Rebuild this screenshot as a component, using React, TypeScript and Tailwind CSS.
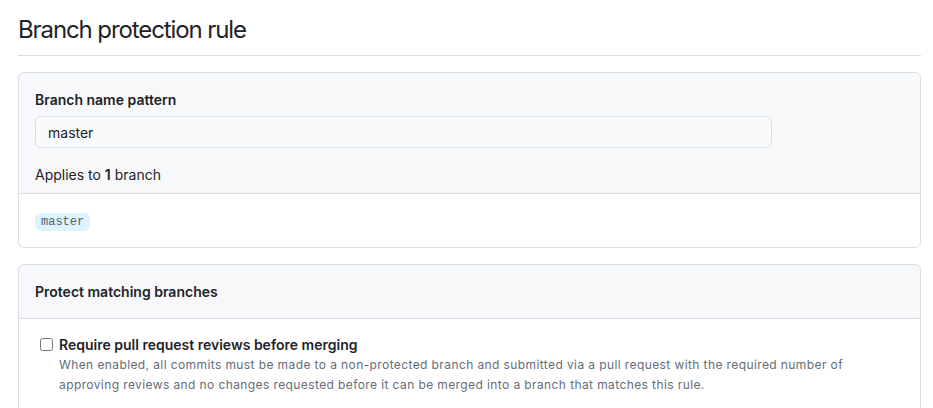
import type React from 'react';

const App: React.FC = () => {
	return (
		<div className="min-h-screen bg-white pl-[18px] pr-[12px] text-[#1f2328] font-['Inter','Liberation_Sans',sans-serif]">
			<div className="pt-[12px] pb-[7px] border-b border-[#d8dee4]">
				<h1 className="text-[24px] leading-[36px] font-normal tracking-[-1.1px]">Branch protection rule</h1>
			</div>

			<div className="mt-[16px] rounded-md border border-[#d8dee4] overflow-hidden">
				<div className="bg-[#f6f8fa] px-4 pt-4 pb-[8px] border-b border-[#d8dee4]">
					<label className="block text-[14px] leading-[21px] font-semibold">
						Branch name pattern
					</label>
					<input
						type="text"
						defaultValue="master"
						className="mt-[6px] block w-[737px] h-[32px] px-3 text-[14px] rounded-md border border-[#d8dee4] bg-[#f9fafb] text-[#1f2328] outline-none"
					/>
					<p className="mt-[16px] text-[14px] leading-[21px]">
						Applies to <strong className="font-semibold">1</strong> branch
					</p>
				</div>
				<div className="flex items-start px-4 pt-[19px] h-[53px]">
					<span className="block px-[6px] h-[18px] leading-[18px] rounded-md bg-[#ddf4ff] text-[#57606a] text-[12px] font-['Liberation_Mono','DejaVu_Sans_Mono',monospace]">
						master
					</span>
				</div>
			</div>

			<div className="mt-[16px] rounded-t-md border border-b-0 border-[#d8dee4] overflow-hidden">
				<div className="bg-[#f6f8fa] px-4 py-4 border-b border-[#d8dee4]">
					<h2 className="text-[14px] leading-[21px] font-semibold">Protect matching branches</h2>
				</div>
				<div className="pl-[21px] pr-4 pt-[15px] pb-6">
					<div className="flex items-start gap-[6px]">
						<input
							type="checkbox"
							className="mt-[4px] w-[13px] h-[13px] shrink-0"
						/>
						<div>
							<div className="text-[14px] leading-[21px] font-semibold">
								Require pull request reviews before merging
							</div>
							<p className="text-[12px] leading-[20px] text-[#656d76] tracking-[0.4px] max-w-[820px]">
								When enabled, all commits must be made to a non-protected branch and submitted via a pull request with the required number of approving reviews and no changes requested before it can be merged into a branch that matches this rule.
							</p>
						</div>
					</div>
				</div>
			</div>
		</div>
	);
};

export default App;
